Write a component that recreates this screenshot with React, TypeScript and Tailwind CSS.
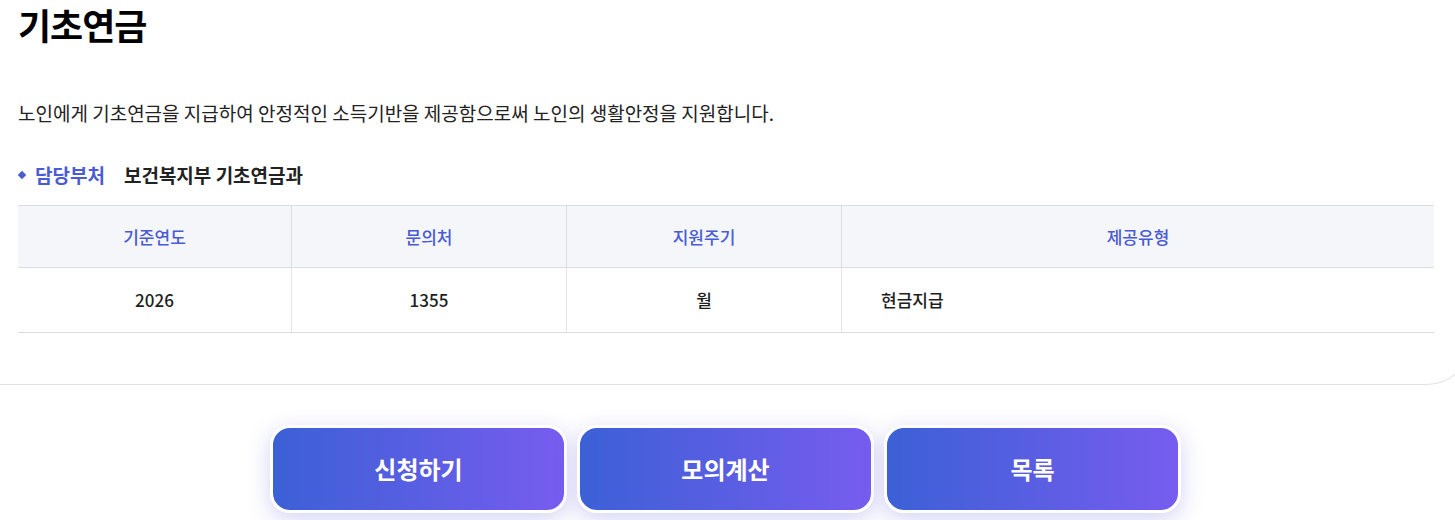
const columns = ["기준연도", "문의처", "지원주기", "제공유형"]

function InfoTable() {
  return (
    <div className="mx-[18px] mr-[20px] border-t border-[#dcdde3]">
      <div className="grid grid-cols-[274px_275px_275px_1fr] bg-[#f5f6fa] border-b border-[#dcdde3]">
        {columns.map((col, i) => (
          <div
            key={col}
            className={`flex h-[61px] items-center justify-center text-[17px] font-medium text-[#4a5bd6] ${
              i < columns.length - 1 ? "border-r border-[#dcdde3]" : ""
            }`}
          >
            {col}
          </div>
        ))}
      </div>
      <div className="grid grid-cols-[274px_275px_275px_1fr] border-b border-[#dcdde3] text-[17px] font-medium text-[#1e1e1e]">
        <div className="flex h-[64px] items-center justify-center border-r border-[#e3e4e8]">2026</div>
        <div className="flex h-[64px] items-center justify-center border-r border-[#e3e4e8]">1355</div>
        <div className="flex h-[64px] items-center justify-center border-r border-[#e3e4e8]">월</div>
        <div className="flex h-[64px] items-center pl-[39px]">현금지급</div>
      </div>
    </div>
  )
}

function ActionButton({ label }: { label: string }) {
  return (
    <button
      type="button"
      className="flex h-[88px] w-[297px] items-center justify-center rounded-[20px] border-[3px] border-white bg-gradient-to-r from-[#3b60d6] via-[#585ee2] to-[#775cef] text-[24px] font-bold text-white shadow-[0_6px_22px_rgba(98,92,220,0.28)]"
    >
      {label}
    </button>
  )
}

export default function App() {
  return (
    <div
      className="h-[520px] w-full overflow-hidden bg-white text-[#222]"
      style={{ fontFamily: '"Noto Sans CJK KR", "Noto Sans", sans-serif' }}
    >
      <div className="-ml-[20px] -mr-[16px] rounded-br-[44px] border-b border-r border-[#e2e2e4] pl-[20px] pr-[16px] pb-[51px]">
        <h1 className="pl-[18px] pt-[1px] text-[36px] font-bold leading-[46px] tracking-[-1px] text-black">
          기초연금
        </h1>
        <p className="mt-[52px] pl-[18px] text-[19px] leading-[28px] text-[#222]">
          노인에게 기초연금을 지급하여 안정적인 소득기반을 제공함으로써 노인의 생활안정을 지원합니다.
        </p>
        <div className="mt-[34px] flex items-center pl-[18px] text-[19px] font-semibold leading-[28px]">
          <span className="mr-[10px] ml-[1px] h-[6px] w-[6px] rotate-45 bg-[#4a5bd6]" />
          <span className="text-[#4a5bd6]">담당부처</span>
          <span className="ml-[19px] text-[#222]">보건복지부 기초연금과</span>
        </div>
        <div className="mt-[16px]">
          <InfoTable />
        </div>
      </div>
      <div className="mt-[40px] flex justify-center gap-[10px] pr-[4px]">
        <ActionButton label="신청하기" />
        <ActionButton label="모의계산" />
        <ActionButton label="목록" />
      </div>
    </div>
  )
}
